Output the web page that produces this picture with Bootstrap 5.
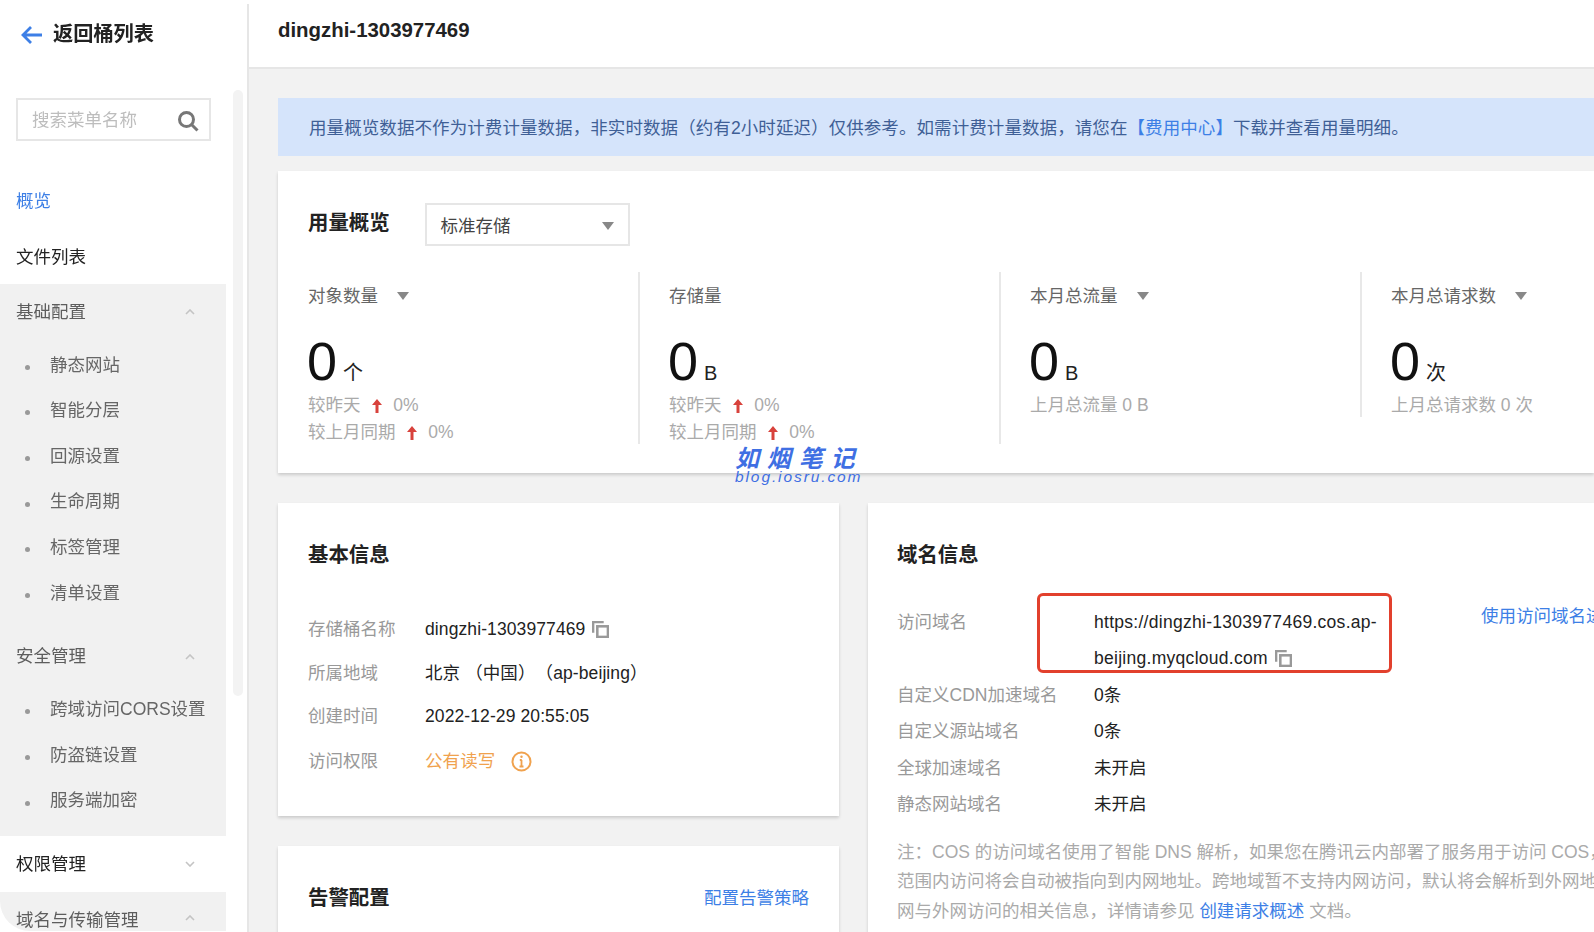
<!doctype html>
<html lang="zh-CN">
<head>
<meta charset="utf-8">
<title>用量概览</title>
<link rel="stylesheet" href="https://cdn.jsdelivr.net/npm/bootstrap@5.3.0/dist/css/bootstrap.min.css">
<style>
html,body{height:100%;overflow:hidden;background:#fff}
body{font-family:"Liberation Sans","Noto Sans CJK SC",sans-serif;font-size:17.5px;color:#222}
.shell{width:1594px;height:932px;position:relative;overflow:hidden;filter:blur(.4px)}
.side{width:249px;flex:none;border-right:2px solid #e6e6e6;margin-top:4px;position:relative;height:928px;overflow:hidden}
.back-row{height:60px;padding-left:21px;font-size:20.2px;font-weight:700;color:#222;gap:10px;padding-top:1px}
.side-search{margin:34px 0 0 16px;width:195px;height:43px;border:2px solid #e6e6e6;padding:2px 10px 0 14px;color:#bdbdbd}
.menu-wrap{width:226px}
.menu-top{height:55px;padding-left:16px;display:flex;align-items:center}
.menu-top.first-m{margin-top:32px;padding-top:2px}
.menu-top.next-m{height:56px;padding-top:2px}
.blue-t{color:#3d7fe6}
.menu-grp{background:#f1f1f1}
.grp-head{height:58px;padding:0 31px 2px 16px;display:flex;align-items:center;justify-content:space-between;color:#5d5d5d}
.grp-head.second-h{margin-top:13px}
.grp-head.plain{background:#fff;color:#222;height:56px;padding-bottom:0}
.grp-item{height:45.6px;padding-left:25px;display:flex;align-items:center;color:#666}
.grp-item::before{content:"";width:5px;height:5px;border-radius:50%;background:#999;margin-right:20px;margin-top:5px}
.grp-end{height:13px}
.corner-g{border-bottom-left-radius:30px;height:39px;align-items:flex-start;padding-top:15px;padding-bottom:0;box-sizing:border-box}
.corner-g svg{margin-top:8px}
.scroll-th{position:absolute;left:233px;top:86px;width:10px;height:606px;background:#f3f3f3;border-radius:5px}
.main-col{flex:1;min-width:0;background:#f2f2f2;height:932px;overflow:hidden}
.top-hd{height:69px;background:#fff;border-bottom:2px solid #e6e6e6;padding-left:29px;padding-bottom:6px;font-size:20.4px;font-weight:700;display:flex;align-items:center;color:#222}
.main-in{padding-left:29px}
.tip-bar{margin-top:29px;height:58px;background:#d5e4fb;padding:2px 0 0 31px;display:flex;align-items:center;color:#3f5f96;white-space:nowrap;letter-spacing:.08px}
.a-blue{color:#3d7fe6;text-decoration:none}
.box{background:#fff;box-shadow:0 2px 3px rgba(0,0,0,.16)}
.box-ov{margin-top:15px;height:302px;padding:32px 0 0 30px}
.hd-t{font-size:20.4px;font-weight:700;color:#222}
.ov-t{margin-top:-3px}
.fake-sel{width:205px;height:43px;border:2px solid #e6e6e6;margin-left:35px;padding:3px 14px 0 14px;color:#444}
.st-row{margin-top:26px}
.st-col{width:361px;flex:none;position:relative}
.st-in{width:332px;border-right:2px solid #e8e8e8}
.st-tall{height:172px}
.st-short{height:145px}
.st-lb{height:46px;padding-top:2px;display:flex;align-items:center;color:#666;gap:19px}
.st-num{font-size:54px;line-height:60px;margin-top:13px;color:#111;height:61px;margin-left:-1px}
.st-unit{font-size:20px;margin-left:6px;color:#222}
.st-sub{color:#aaa;line-height:26.5px;white-space:nowrap}
.up-i{color:#d8423c;margin:0 7px 0 11px;vertical-align:-2px}
.cards-r{margin-top:30px;align-items:flex-start;gap:29px}
.lcol{width:561px;flex:none}
.rcol{flex:1;min-width:0}
.box-info{height:313px;padding:37px 30px 0}
.info-row{display:flex;height:43.5px;align-items:center;letter-spacing:.1px}
.info-row.last-r{padding-top:3px}
.info-lb{width:117px;flex:none;color:#999;letter-spacing:0}
.tight-paren{margin-left:-5px}
.hd-gap{height:37px}
.box-alarm{margin-top:30px;height:100px;padding:37px 30px 0}
.box-alarm .a-blue{margin-top:2px}
.box-dom{height:460px;padding:37px 0 0 29px;position:relative}
.dom-gap{height:33px}
.dom-row{display:flex;line-height:36.5px}
.dom-lb{width:197px;flex:none;color:#999}
.dom-val{width:292px;flex:none;letter-spacing:.28px}
.dom-side{margin-left:95px;white-space:nowrap;margin-top:-6px}
.note-tx{margin-top:15px;color:#aaa;line-height:29.5px;white-space:nowrap}
.red-mark{position:absolute;left:169px;top:90px;width:355px;height:80px;border:3px solid #e2402d;border-radius:6px}
.wm{position:absolute;left:735px;top:449px;color:#3f6fe3;font-style:italic}
.wm-a{font-size:24px;line-height:20px;font-weight:700;letter-spacing:.6px;white-space:nowrap}
.wm-b{font-size:15.5px;line-height:16px;letter-spacing:1.9px;white-space:nowrap}
.cp-i{margin-left:7px;vertical-align:-3px}
.orange-t{color:#f0a24e}
</style>
</head>
<body>
<div class="shell d-flex">
  <aside class="side">
    <div class="back-row d-flex align-items-center">
      <svg width="22" height="22" viewBox="0 0 22 22" fill="none" stroke="#3d7fe6" stroke-width="2.8"><path d="M21 11H2M10 3 2 11l8 8"/></svg>
      <span>返回桶列表</span>
    </div>
    <div class="side-search d-flex align-items-center justify-content-between">
      <span>搜索菜单名称</span>
      <svg width="22" height="22" viewBox="0 0 22 22" fill="none" stroke="#777" stroke-width="3"><circle cx="9.5" cy="9.5" r="7"/><path d="m14.5 14.5 6 6"/></svg>
    </div>
    <div class="menu-wrap">
      <div class="menu-top first-m blue-t">概览</div>
      <div class="menu-top next-m">文件列表</div>
      <div class="menu-grp">
        <div class="grp-head"><span>基础配置</span><svg width="10" height="6" viewBox="0 0 10 6" fill="none" stroke="#c4c4c4" stroke-width="1.6"><path d="m1 5 4-4 4 4"/></svg></div>
        <div class="grp-item">静态网站</div>
        <div class="grp-item">智能分层</div>
        <div class="grp-item">回源设置</div>
        <div class="grp-item">生命周期</div>
        <div class="grp-item">标签管理</div>
        <div class="grp-item">清单设置</div>
        <div class="grp-head second-h"><span>安全管理</span><svg width="10" height="6" viewBox="0 0 10 6" fill="none" stroke="#c4c4c4" stroke-width="1.6"><path d="m1 5 4-4 4 4"/></svg></div>
        <div class="grp-item">跨域访问CORS设置</div>
        <div class="grp-item">防盗链设置</div>
        <div class="grp-item">服务端加密</div>
        <div class="grp-end"></div>
      </div>
      <div class="grp-head plain"><span>权限管理</span><svg width="10" height="6" viewBox="0 0 10 6" fill="none" stroke="#c4c4c4" stroke-width="1.6"><path d="m1 1 4 4 4-4"/></svg></div>
      <div class="grp-head menu-grp corner-g"><span>域名与传输管理</span><svg width="10" height="6" viewBox="0 0 10 6" fill="none" stroke="#c4c4c4" stroke-width="1.6"><path d="m1 5 4-4 4 4"/></svg></div>
    </div>
    <div class="scroll-th"></div>
  </aside>
  <main class="main-col">
    <div class="top-hd">dingzhi-1303977469</div>
    <div class="main-in">
      <div class="tip-bar">用量概览数据不作为计费计量数据，非实时数据（约有2小时延迟）仅供参考。如需计费计量数据，请您在<a class="a-blue" href="#">【费用中心】</a>下载并查看用量明细。</div>
      <section class="box box-ov">
        <div class="d-flex align-items-center">
          <div class="hd-t ov-t">用量概览</div>
          <div class="fake-sel d-flex align-items-center justify-content-between"><span>标准存储</span><svg width="12" height="8" viewBox="0 0 12 8" fill="#888"><path d="M0 0h12L6 8z"/></svg></div>
        </div>
        <div class="st-row d-flex">
          <div class="st-col"><div class="st-in st-tall">
            <div class="st-lb"><span>对象数量</span><svg width="12" height="8" viewBox="0 0 12 8" fill="#888"><path d="M0 0h12L6 8z"/></svg></div>
            <div class="st-num">0<span class="st-unit">个</span></div>
            <div class="st-sub">较昨天<svg class="up-i" width="10" height="14" viewBox="0 0 10 14" fill="currentColor"><path d="M5 0 10 6H6.5v8h-3V6H0z"/></svg> 0%</div>
            <div class="st-sub">较上月同期<svg class="up-i" width="10" height="14" viewBox="0 0 10 14" fill="currentColor"><path d="M5 0 10 6H6.5v8h-3V6H0z"/></svg> 0%</div>
          </div></div>
          <div class="st-col"><div class="st-in st-tall">
            <div class="st-lb"><span>存储量</span></div>
            <div class="st-num">0<span class="st-unit">B</span></div>
            <div class="st-sub">较昨天<svg class="up-i" width="10" height="14" viewBox="0 0 10 14" fill="currentColor"><path d="M5 0 10 6H6.5v8h-3V6H0z"/></svg> 0%</div>
            <div class="st-sub">较上月同期<svg class="up-i" width="10" height="14" viewBox="0 0 10 14" fill="currentColor"><path d="M5 0 10 6H6.5v8h-3V6H0z"/></svg> 0%</div>
          </div></div>
          <div class="st-col"><div class="st-in st-short">
            <div class="st-lb"><span>本月总流量</span><svg width="12" height="8" viewBox="0 0 12 8" fill="#888"><path d="M0 0h12L6 8z"/></svg></div>
            <div class="st-num">0<span class="st-unit">B</span></div>
            <div class="st-sub">上月总流量 0 B</div>
          </div></div>
          <div class="st-col"><div class="st-lb"><span>本月总请求数</span><svg width="12" height="8" viewBox="0 0 12 8" fill="#888"><path d="M0 0h12L6 8z"/></svg></div>
            <div class="st-num">0<span class="st-unit">次</span></div>
            <div class="st-sub">上月总请求数 0 次</div>
          </div>
        </div>
      </section>
      <div class="cards-r d-flex">
        <div class="lcol">
          <section class="box box-info">
            <div class="hd-t">基本信息</div>
            <div class="hd-gap"></div>
            <div class="info-row"><span class="info-lb">存储桶名称</span><span>dingzhi-1303977469<svg class="cp-i" width="17" height="17" viewBox="0 0 16 16" fill="none" stroke="#999" stroke-width="2.4"><path d="M1 11V1h10"/><rect x="5" y="5" width="10" height="10"/></svg></span></div>
            <div class="info-row"><span class="info-lb">所属地域</span><span>北京 （中国） <span class="tight-paren">（ap-beijing）</span></span></div>
            <div class="info-row"><span class="info-lb">创建时间</span><span>2022-12-29 20:55:05</span></div>
            <div class="info-row last-r"><span class="info-lb">访问权限</span><span class="orange-t d-flex align-items-center">公有读写<svg class="ms-3" width="21" height="21" viewBox="0 0 21 21" fill="none" stroke="#f0a24e" stroke-width="2"><circle cx="10.5" cy="10.5" r="9"/><path d="M10.5 9v6.5M8.5 15.5h4M8.8 9h2" stroke-width="1.8"/><circle cx="10.5" cy="5.8" r="1.2" fill="#f0a24e" stroke="none"/></svg></span></div>
          </section>
          <section class="box box-alarm d-flex justify-content-between align-items-start">
            <div class="hd-t">告警配置</div>
            <a class="a-blue" href="#">配置告警策略</a>
          </section>
        </div>
        <div class="rcol">
          <section class="box box-dom">
            <div class="hd-t">域名信息</div>
            <div class="dom-gap"></div>
            <div class="dom-row"><span class="dom-lb">访问域名</span><span class="dom-val">https://dingzhi-1303977469.cos.ap-beijing.myqcloud.com<svg class="cp-i" width="17" height="17" viewBox="0 0 16 16" fill="none" stroke="#999" stroke-width="2.4"><path d="M1 11V1h10"/><rect x="5" y="5" width="10" height="10"/></svg></span><a class="a-blue dom-side" href="#">使用访问域名进行访问</a></div>
            <div class="dom-row"><span class="dom-lb">自定义CDN加速域名</span><span>0条</span></div>
            <div class="dom-row"><span class="dom-lb">自定义源站域名</span><span>0条</span></div>
            <div class="dom-row"><span class="dom-lb">全球加速域名</span><span>未开启</span></div>
            <div class="dom-row"><span class="dom-lb">静态网站域名</span><span>未开启</span></div>
            <div class="note-tx">注：COS 的访问域名使用了智能 DNS 解析，如果您在腾讯云内部署了服务用于访问 COS，则在同地域<br>范围内访问将会自动被指向到内网地址。跨地域暂不支持内网访问，默认将会解析到外网地址<br>网与外网访问的相关信息，详情请参见 <a class="a-blue" href="#">创建请求概述</a> 文档。</div>
            <div class="red-mark"></div>
          </section>
        </div>
      </div>
    </div>
  </main>
  <div class="wm"><div class="wm-a">如 烟 笔 记</div><div class="wm-b">blog.iosru.com</div></div>
</div>
<script src="https://cdn.jsdelivr.net/npm/bootstrap@5.3.0/dist/js/bootstrap.bundle.min.js"></script>
</body>
</html>
